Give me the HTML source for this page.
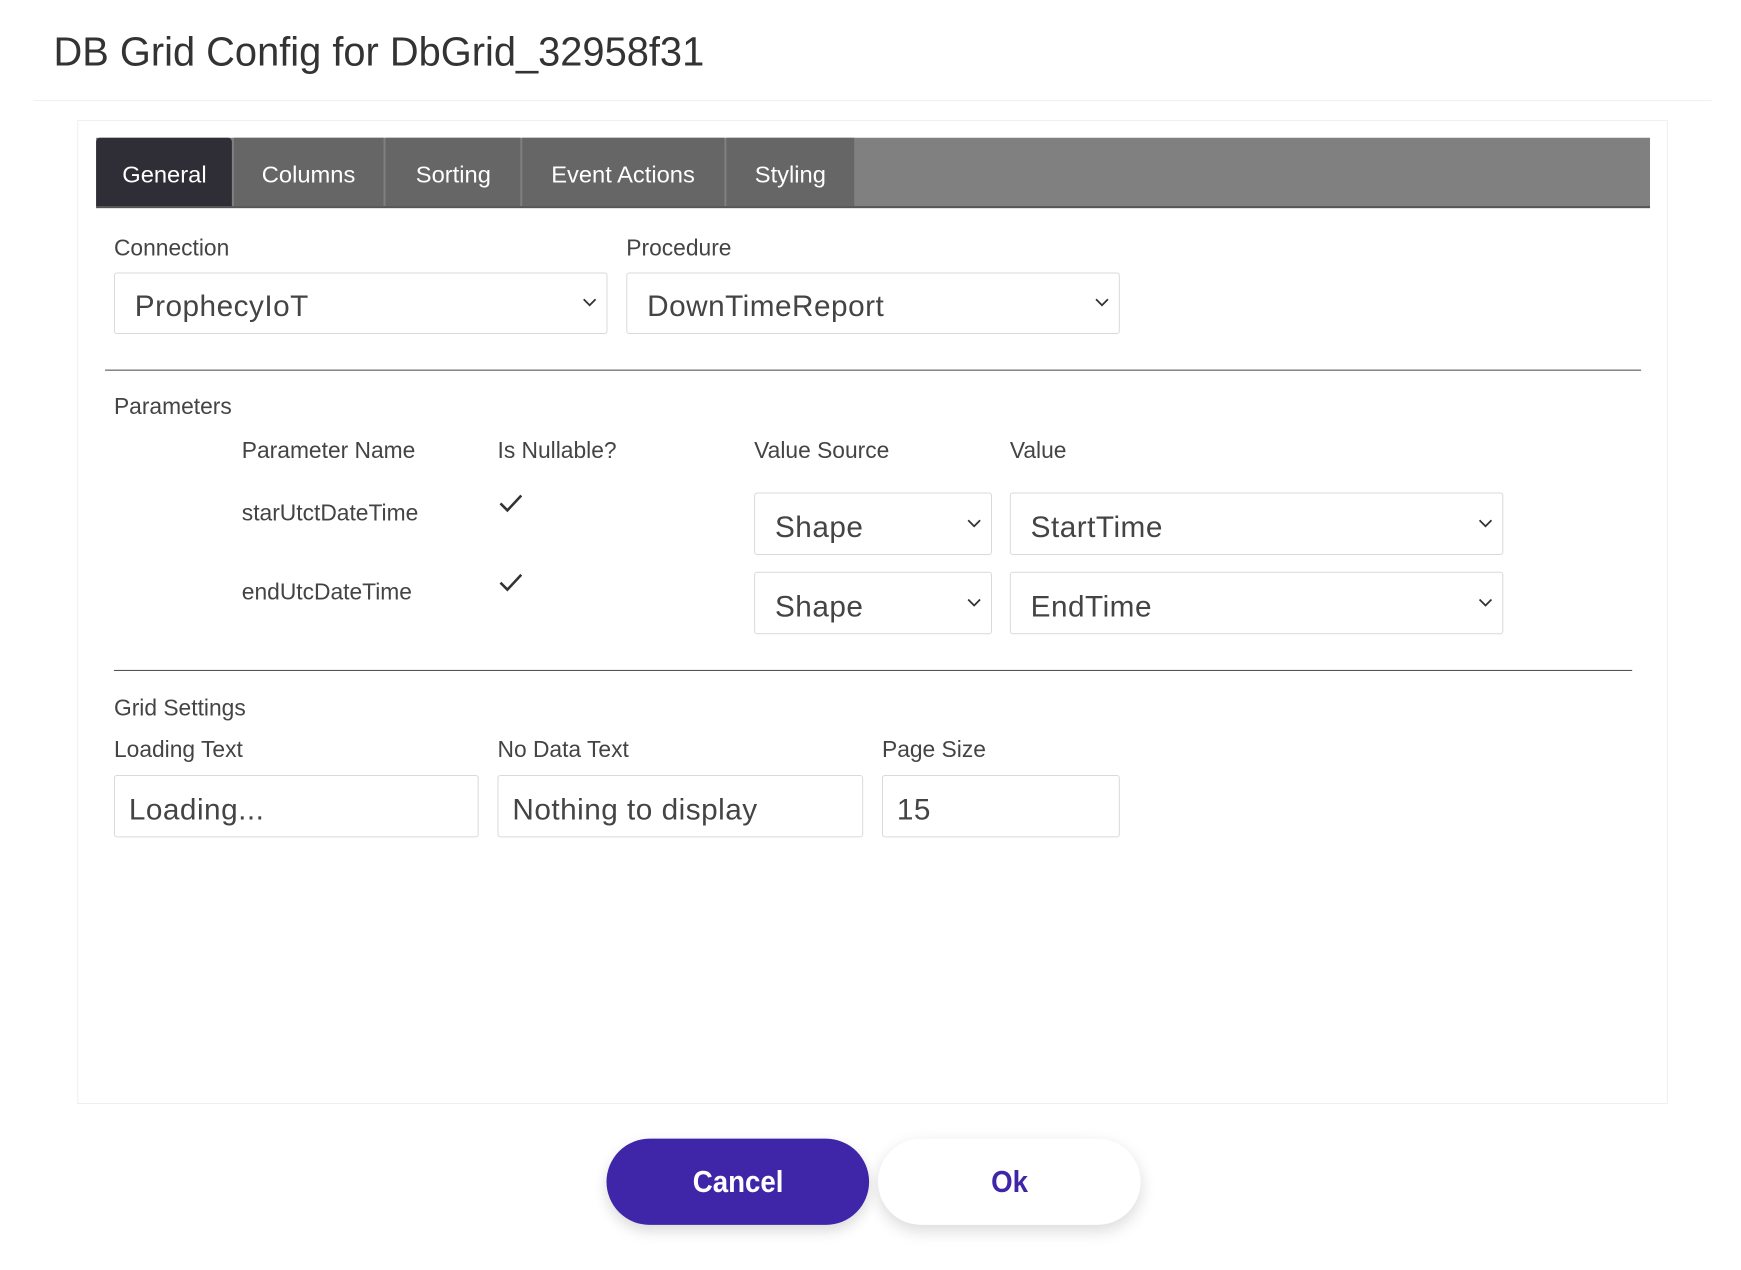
<!DOCTYPE html>
<html><head><meta charset="utf-8"><style>
*{box-sizing:border-box;margin:0;padding:0}
body{width:1741px;height:1270px;background:#fff;font-family:"Liberation Sans",sans-serif;color:#333;position:relative;overflow:hidden}
#w{position:absolute;left:0;top:0;width:1741px;height:1270px;transform:scale(.991);transform-origin:0 0}
.a{position:absolute;white-space:nowrap}
.t{transform-origin:left center;display:inline-block}
.sel{position:absolute;border:1px solid #d9d9d9;border-radius:3px;background:#fff}
.sel span{position:absolute;left:20px;top:calc(50% + 4px);transform:translateY(-50%);transform-origin:left center;font-size:30px;color:#444;letter-spacing:.5px}
.sel svg{position:absolute;right:10px;top:50%;margin-top:-5px}
.lbl{font-size:23px;color:#444;margin-top:2px}
.tab{position:absolute;top:139px;height:69px;padding-top:6px;background:#666;color:#fff;font-size:23px;display:flex;align-items:center;justify-content:center}
.tab span{transform:scaleX(1.04);display:inline-block}
</style></head><body><div id="w">
<div class="a" style="left:54px;top:29px;font-size:41px;color:#333"><span class="t" style="transform:scaleX(.98)">DB Grid Config for DbGrid_32958f31</span></div>
<div class="a" style="left:34px;top:101px;width:1693px;height:1px;background:#eee"></div>
<div class="a" style="left:78px;top:121px;width:1605px;height:993px;border:1px solid #eee"></div>

<div class="a" style="left:97px;top:139px;width:1568px;height:71px;background:#808080;border-bottom:2px solid #555"></div>
<div class="tab" style="left:97px;width:137px;background:#2f2d36;border-radius:4px 4px 0 0"><span>General</span></div>
<div class="tab" style="left:236px;width:151px"><span>Columns</span></div>
<div class="tab" style="left:389px;width:136px"><span>Sorting</span></div>
<div class="tab" style="left:527px;width:204px"><span>Event Actions</span></div>
<div class="tab" style="left:733px;width:129px"><span>Styling</span></div>

<div class="a lbl" style="left:115px;top:235px">Connection</div>
<div class="a lbl" style="left:632px;top:235px">Procedure</div>
<div class="sel" style="left:115px;top:275px;width:498px;height:62px"><span>ProphecyIoT</span><svg width="14" height="9"><path d="M1 1l6 6 6-6" stroke="#333" stroke-width="1.8" fill="none"/></svg></div>
<div class="sel" style="left:632px;top:275px;width:498px;height:62px"><span>DownTimeReport</span><svg width="14" height="9"><path d="M1 1l6 6 6-6" stroke="#333" stroke-width="1.8" fill="none"/></svg></div>

<div class="a" style="left:106px;top:373px;width:1550px;height:1px;background:#444"></div>
<div class="a lbl" style="left:115px;top:395px">Parameters</div>
<div class="a lbl" style="left:244px;top:439px">Parameter Name</div>
<div class="a lbl" style="left:502px;top:439px">Is Nullable?</div>
<div class="a lbl" style="left:761px;top:439px">Value Source</div>
<div class="a lbl" style="left:1019px;top:439px">Value</div>

<div class="a lbl" style="left:244px;top:502px">starUtctDateTime</div>
<div class="a lbl" style="left:244px;top:582px">endUtcDateTime</div>
<svg class="a" style="left:503px;top:498px" width="25" height="20"><path d="M2 10l7 7L23 2" stroke="#333" stroke-width="2.6" fill="none"/></svg>
<svg class="a" style="left:503px;top:578px" width="25" height="20"><path d="M2 10l7 7L23 2" stroke="#333" stroke-width="2.6" fill="none"/></svg>

<div class="sel" style="left:761px;top:497px;width:240px;height:63px"><span>Shape</span><svg width="14" height="9"><path d="M1 1l6 6 6-6" stroke="#333" stroke-width="1.8" fill="none"/></svg></div>
<div class="sel" style="left:1019px;top:497px;width:498px;height:63px"><span>StartTime</span><svg width="14" height="9"><path d="M1 1l6 6 6-6" stroke="#333" stroke-width="1.8" fill="none"/></svg></div>
<div class="sel" style="left:761px;top:577px;width:240px;height:63px"><span>Shape</span><svg width="14" height="9"><path d="M1 1l6 6 6-6" stroke="#333" stroke-width="1.8" fill="none"/></svg></div>
<div class="sel" style="left:1019px;top:577px;width:498px;height:63px"><span>EndTime</span><svg width="14" height="9"><path d="M1 1l6 6 6-6" stroke="#333" stroke-width="1.8" fill="none"/></svg></div>

<div class="a" style="left:115px;top:676px;width:1532px;height:1px;background:#444"></div>
<div class="a lbl" style="left:115px;top:699px">Grid Settings</div>
<div class="a lbl" style="left:115px;top:741px">Loading Text</div>
<div class="a lbl" style="left:502px;top:741px">No Data Text</div>
<div class="a lbl" style="left:890px;top:741px">Page Size</div>
<div class="sel" style="left:115px;top:782px;width:368px;height:63px"><span style="left:14px">Loading...</span></div>
<div class="sel" style="left:502px;top:782px;width:369px;height:63px"><span style="left:14px">Nothing to display</span></div>
<div class="sel" style="left:890px;top:782px;width:240px;height:63px"><span style="left:14px">15</span></div>

<div class="a" style="left:612px;top:1149px;width:265px;height:87px;border-radius:44px;background:#3f26a8;box-shadow:0 6px 14px rgba(0,0,0,.15);color:#fff;font-weight:bold;font-size:31px;display:flex;align-items:center;justify-content:center"><span style="transform:scaleX(.9);display:inline-block">Cancel</span></div>
<div class="a" style="left:886px;top:1149px;width:265px;height:87px;border-radius:44px;background:#fff;box-shadow:0 6px 16px rgba(0,0,0,.15);color:#3f26a8;font-weight:bold;font-size:31px;display:flex;align-items:center;justify-content:center"><span style="transform:scaleX(.9);display:inline-block">Ok</span></div>
</div></body></html>
